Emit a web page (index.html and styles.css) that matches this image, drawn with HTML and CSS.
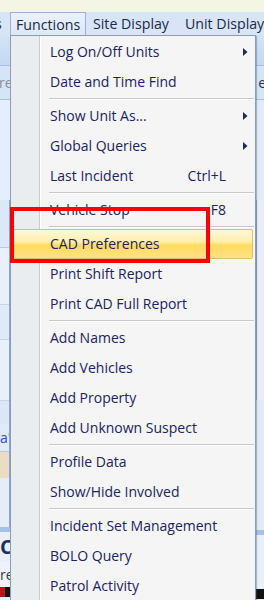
FILE: index.html
```html
<!DOCTYPE html>
<html lang="en">
<head>
	<meta charset="UTF-8">
	<title>CAD - Functions</title>
	<link rel="stylesheet" href="styles.css">
</head>
<body>
	<div class="app">
		<div class="titlestrip"></div>
		<div class="menubar">
			<span class="mb-item mb-cut">s</span>
			<span class="mb-item mb-open">Functions</span>
			<span class="mb-item mb-site">Site Display</span>
			<span class="mb-item">Unit Display</span>
		</div>
		<div class="toolbar"></div>
		<div class="tabrow">
			<span class="tab-left">re</span>
			<span class="tab-right">e</span>
		</div>
		<div class="workspace">
			<div class="pane-left">
				<div class="band b-top"></div>
				<div class="pane-grid">
					<div class="band b1"></div>
					<div class="band b2"></div>
					<div class="band b3"></div>
					<div class="band b4"></div>
					<div class="band b5"></div>
					<div class="band b6"><span class="link-text">a'</span></div>
					<div class="band b7"></div>
					<div class="band b8"></div>
				</div>
				<div class="band stripe"></div>
				<div class="band b9"><span class="big-text">C</span></div>
				<div class="band b10"><span class="small-text">re</span></div>
				<div class="band b-dark"><span class="red-bit"></span></div>
			</div>
			<div class="pane-right">
				<div class="band r1"></div>
				<div class="band r2"></div>
				<div class="band r3"></div>
				<div class="band stripe"></div>
				<div class="band r4"></div>
				<div class="band b-dark"></div>
			</div>
		</div>

		<div class="dropdown">
			<div class="mi"><span class="mi-label">Log On/Off Units</span><span class="mi-key"></span><span class="mi-sub"><svg width="5" height="8" viewBox="0 0 5 8"><polygon points="0,0 4.5,4 0,8"/></svg></span></div>
			<div class="mi"><span class="mi-label">Date and Time Find</span><span class="mi-key"></span><span class="mi-sub"></span></div>
			<div class="sep"></div>
			<div class="mi"><span class="mi-label">Show Unit As...</span><span class="mi-key"></span><span class="mi-sub"><svg width="5" height="8" viewBox="0 0 5 8"><polygon points="0,0 4.5,4 0,8"/></svg></span></div>
			<div class="mi"><span class="mi-label">Global Queries</span><span class="mi-key"></span><span class="mi-sub"><svg width="5" height="8" viewBox="0 0 5 8"><polygon points="0,0 4.5,4 0,8"/></svg></span></div>
			<div class="mi"><span class="mi-label">Last Incident</span><span class="mi-key">Ctrl+L</span><span class="mi-sub"></span></div>
			<div class="sep"></div>
			<div class="mi"><span class="mi-label">Vehicle Stop</span><span class="mi-key">F8</span><span class="mi-sub"></span></div>
			<div class="sep"></div>
			<div class="mi mi-hot"><span class="mi-label">CAD Preferences</span><span class="mi-key"></span><span class="mi-sub"></span></div>
			<div class="mi"><span class="mi-label">Print Shift Report</span><span class="mi-key"></span><span class="mi-sub"></span></div>
			<div class="mi"><span class="mi-label">Print CAD Full Report</span><span class="mi-key"></span><span class="mi-sub"></span></div>
			<div class="sep"></div>
			<div class="mi"><span class="mi-label">Add Names</span><span class="mi-key"></span><span class="mi-sub"></span></div>
			<div class="mi"><span class="mi-label">Add Vehicles</span><span class="mi-key"></span><span class="mi-sub"></span></div>
			<div class="mi"><span class="mi-label">Add Property</span><span class="mi-key"></span><span class="mi-sub"></span></div>
			<div class="mi"><span class="mi-label">Add Unknown Suspect</span><span class="mi-key"></span><span class="mi-sub"></span></div>
			<div class="sep"></div>
			<div class="mi"><span class="mi-label">Profile Data</span><span class="mi-key"></span><span class="mi-sub"></span></div>
			<div class="mi"><span class="mi-label">Show/Hide Involved</span><span class="mi-key"></span><span class="mi-sub"></span></div>
			<div class="sep"></div>
			<div class="mi"><span class="mi-label">Incident Set Management</span><span class="mi-key"></span><span class="mi-sub"></span></div>
			<div class="mi"><span class="mi-label">BOLO Query</span><span class="mi-key"></span><span class="mi-sub"></span></div>
			<div class="mi"><span class="mi-label">Patrol Activity</span><span class="mi-key"></span><span class="mi-sub"></span></div>
		</div>

		<!-- annotation drawn over the screenshot -->
		<div class="callout"></div>
	</div>
</body>
</html>
```

FILE: styles.css
```css
html, body {
	margin: 0;
	padding: 0;
}

body {
	font-family: "Open Sans", "Noto Sans", sans-serif;
	font-size: 14px;
	overflow: hidden;
}

.app {
	width: 264px;
	height: 600px;
	position: relative;
	overflow: hidden;
	background: #e4edf9;
}

.titlestrip {
	height: 12px;
	background: #f5f5e3;
}

.menubar {
	height: 23px;
	display: flex;
	align-items: stretch;
	background: #d8e5f6;
	color: #1a2948;
	font-size: 14.2px;
	white-space: nowrap;
	overflow: hidden;
}

.mb-item {
	flex: none;
	display: flex;
	align-items: center;
	padding: 0 6px;
	margin-right: 1px;
}

.mb-cut {
	padding: 0;
	width: 10px;
	margin-right: 0;
	justify-content: flex-start;
	text-indent: -5px;
	overflow: hidden;
}

.mb-open {
	box-sizing: border-box;
	width: 76px;
	padding-left: 5px;
	border: 1px solid #9fb3d0;
	border-bottom: 0;
	background: linear-gradient(#eaf1fb, #dde8f7);
}

.mb-site {
	margin-right: 4px;
}

.toolbar {
	height: 30px;
	background: linear-gradient(#d4e3f7, #c4d8f2);
	border-bottom: 1px solid #a7bfe2;
}

.tabrow {
	height: 33px;
	display: flex;
	justify-content: space-between;
	align-items: center;
	background: #d6e4f7;
	border-bottom: 1px solid #a9c0e0;
	overflow: hidden;
}

.tab-left {
	color: #8a8f99;
	text-indent: -1px;
}

.tab-right {
	color: #2a3550;
	margin-right: -2px;
}

.workspace {
	display: flex;
	justify-content: space-between;
	height: 500px;
}

.pane-left {
	width: 10px;
	display: flex;
	flex-direction: column;
}

.pane-right {
	width: 8px;
	display: flex;
	flex-direction: column;
}

.band {
	flex: none;
	overflow: hidden;
	white-space: nowrap;
}

.b-top { height: 100px; background: #e5eefa; }

.pane-grid {
	border-right: 1px solid #86a6d6;
}

.b1 { height: 47px; background: #dce7f7; border-bottom: 1px solid #b7cae5; }
.b2 { height: 56px; background: #e9f0fb; border-bottom: 1px solid #c3d3ea; }
.b3 { height: 34px; background: #dfe9f8; border-bottom: 1px solid #c3d3ea; }
.b4 { height: 60px; background: #e9f0fb; border-bottom: 1px solid #c3d3ea; }
.b5 { height: 23px; background: #dbe6f7; }
.b6 { height: 27px; background: #e0eaf9; border-bottom: 1px solid #b6c9e4; }
.b7 { height: 26px; background: #ecdcc5; }
.b8 { height: 49px; background: #e4edf9; }

.stripe { height: 5px; background: #a6c1e7; }
.b9 { height: 30px; background: #e8eff9; }
.b10 { height: 25px; background: #eef3fa; }
.b-dark { height: 10px; background: #111; }

.link-text {
	color: #2b4fc8;
	line-height: 27px;
}

.big-text {
	color: #1c2f63;
	font-size: 20px;
	font-weight: bold;
	line-height: 30px;
}

.small-text {
	color: #30384a;
	line-height: 25px;
}

.red-bit {
	display: block;
	width: 5px;
	height: 10px;
	background: #b01818;
}

.r1 { height: 100px; background: #e2ecf9; }
.r2 { height: 200px; background: #e6eefa; border-left: 1px solid #9fb5d3; box-sizing: border-box; }
.r3 { height: 130px; background: #e1eaf8; }
.r4 { height: 54px; background: #e8f0fa; }

/* dropdown menu */

.dropdown {
	position: absolute;
	left: 10px;
	top: 35px;
	width: 244px;
	height: 580px;
	padding-top: 1px;
	border: 1px solid #8e9cb2;
	background: linear-gradient(to right, #e9edef 0, #e9edef 28px, #c9cbcd 28px, #c9cbcd 29px, #fff 29px, #fff 30px, #f5f5f5 30px);
	box-shadow: 1px 1px 1px rgba(60, 80, 110, 0.35);
	color: #20235f;
}

.mi {
	height: 30px;
	margin: 0 2px;
	display: flex;
	align-items: center;
	box-sizing: border-box;
	padding-left: 37px;
	padding-bottom: 1px;
	white-space: nowrap;
}

.mi-label {
	flex: 1;
}

.mi-key {
	text-align: right;
}

.mi-sub {
	width: 27px;
	display: flex;
	align-items: center;
	padding-left: 17px;
	box-sizing: border-box;
}

.mi-sub svg {
	fill: #1d2a63;
	display: block;
}

.mi-hot {
	border: 1px solid #dcbd73;
	border-radius: 2px;
	background: linear-gradient(#fff8dc, #ffeeab 42%, #ffdb60 55%, #ffe287);
	padding-left: 36px;
}

.sep {
	height: 4px;
	margin-left: 38px;
	margin-right: 1px;
	display: flex;
	align-items: center;
}

.sep::before {
	content: "";
	display: block;
	width: 100%;
	height: 1px;
	background: #c8c8c8;
	border-bottom: 1px solid #fff;
}

.callout {
	position: absolute;
	left: 10px;
	top: 207px;
	width: 192px;
	height: 48px;
	border: 4px solid #ff0000;
}
```
